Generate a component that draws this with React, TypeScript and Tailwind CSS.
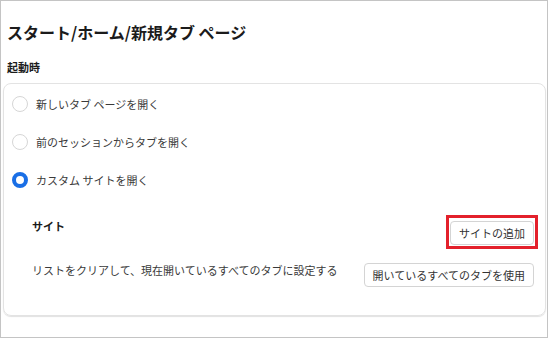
import React, { useState } from 'react';

type Choice = 'newtab' | 'continue' | 'custom';

const options: { id: Choice; label: string }[] = [
  { id: 'newtab', label: '新しいタブ ページを開く' },
  { id: 'continue', label: '前のセッションからタブを開く' },
  { id: 'custom', label: 'カスタム サイトを開く' },
];

const Radio = ({ checked }: { checked: boolean }) =>
  checked ? (
    <span className="w-4 h-4 rounded-full border-[4px] border-[#1a6fe6] bg-white shrink-0" />
  ) : (
    <span className="w-4 h-4 rounded-full border-[1.5px] border-[#d6d6d6] bg-white shrink-0" />
  );

const App = () => {
  const [choice, setChoice] = useState<Choice>('custom');

  return (
    <div
      className="w-[548px] h-[338px] border border-[#c4c4c4] bg-white text-[#333]"
      style={{ fontFamily: '"Noto Sans CJK JP", "Noto Sans", sans-serif' }}
    >
      <h1 className="pl-[6px] pt-[21px] text-[16px] leading-[20px] font-bold text-[#1b1b1b]">
        スタート/ホーム/新規タブ ページ
      </h1>
      <h2 className="pl-[6px] mt-[17px] text-[11px] leading-[16px] font-bold text-[#1b1b1b]">
        起動時
      </h2>

      <div className="ml-[2px] mr-[1px] mt-[8px] rounded-lg border border-[#e3e3e3] shadow-[0_1px_1px_rgba(0,0,0,0.12)] pt-[1px] pb-[28px] pr-[11px]">
        {options.map((o) => (
          <label
            key={o.id}
            className="h-[38px] flex items-center gap-2 pl-[8px] cursor-pointer"
            onClick={() => setChoice(o.id)}
          >
            <Radio checked={choice === o.id} />
            <span className="text-[11px] text-[#3a3a3a]">{o.label}</span>
          </label>
        ))}

        <div className="pl-[28px] mt-[19px] flex flex-col gap-[18px]">
          <div className="flex items-start justify-between">
            <span className="text-[11px] leading-[16px] font-bold text-[#1b1b1b]">
              サイト
            </span>
            <div className="border-[3px] border-[#e3202b] p-[1px] -mt-[3px] -mb-[5px] -mr-[4px]">
              <button className="h-[24px] px-[8px] rounded border border-[#d4d4d4] bg-white text-[11px] text-[#333]">
                サイトの追加
              </button>
            </div>
          </div>
          <div className="flex items-start justify-between">
            <span className="text-[11px] leading-[16px] text-[#3a3a3a]">
              リストをクリアして、現在開いているすべてのタブに設定する
            </span>
            <button className="mt-[1px] h-[24px] px-[8px] rounded border border-[#d4d4d4] bg-white text-[11px] text-[#333]">
              開いているすべてのタブを使用
            </button>
          </div>
        </div>
      </div>
    </div>
  );
};

export default App;
